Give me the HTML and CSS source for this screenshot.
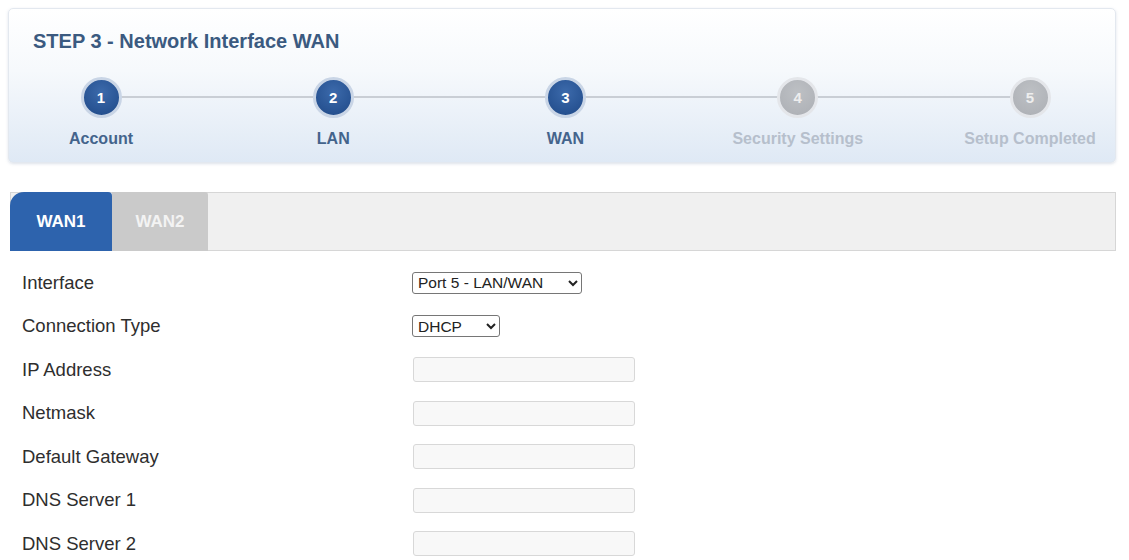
FILE: index.html
```html
<!DOCTYPE html>
<html lang="en">
<head>
<meta charset="utf-8">
<title>STEP 3 - Network Interface WAN</title>
<link rel="stylesheet" href="styles.css">
</head>
<body>
<div class="page">
  <section class="wizard">
    <h1 class="wizard-title">STEP 3 - Network Interface WAN</h1>
    <ol class="steps">
      <li class="step done"><span class="step-dot">1</span><span class="step-label">Account</span></li>
      <li class="step done"><span class="step-dot">2</span><span class="step-label">LAN</span></li>
      <li class="step done"><span class="step-dot">3</span><span class="step-label">WAN</span></li>
      <li class="step todo"><span class="step-dot">4</span><span class="step-label">Security Settings</span></li>
      <li class="step todo"><span class="step-dot">5</span><span class="step-label">Setup Completed</span></li>
    </ol>
  </section>

  <nav class="tabbar">
    <span class="tab tab-active">WAN1</span>
    <span class="tab tab-idle">WAN2</span>
  </nav>

  <form class="form">
    <label class="form-label">Interface</label>
    <div class="form-ctrl">
      <select class="sel sel-port">
        <option>Port 5 - LAN/WAN</option>
      </select>
    </div>

    <label class="form-label">Connection Type</label>
    <div class="form-ctrl">
      <select class="sel sel-type">
        <option>DHCP</option>
      </select>
    </div>

    <label class="form-label">IP Address</label>
    <div class="form-ctrl"><input class="field" type="text" disabled></div>

    <label class="form-label">Netmask</label>
    <div class="form-ctrl"><input class="field" type="text" disabled></div>

    <label class="form-label">Default Gateway</label>
    <div class="form-ctrl"><input class="field" type="text" disabled></div>

    <label class="form-label">DNS Server 1</label>
    <div class="form-ctrl"><input class="field" type="text" disabled></div>

    <label class="form-label">DNS Server 2</label>
    <div class="form-ctrl"><input class="field" type="text" disabled></div>
  </form>
</div>
</body>
</html>
```

FILE: styles.css
```css
* { box-sizing: border-box; }

html, body {
  margin: 0;
  padding: 0;
  background: #ffffff;
  font-family: "Liberation Sans", Arial, sans-serif;
  color: #333333;
}

.page {
  padding: 8px 13px 0 8px;
}

/* ---------- wizard header ---------- */
.wizard {
  height: 155px;
  padding: 20px 20px 0 24px;
  border: 1px solid #e3e8ef;
  border-radius: 5px;
  background: linear-gradient(to bottom, #ffffff 0%, #f6f9fc 40%, #dfe9f5 100%);
  box-shadow: 0 1px 3px rgba(120, 140, 170, 0.25);
}

.wizard-title {
  margin: 0;
  font-size: 20px;
  line-height: 24px;
  font-weight: bold;
  color: #3b5a80;
}

.steps {
  position: relative;
  list-style: none;
  margin: 24px 0 0 3px;
  padding: 0;
  display: flex;
  justify-content: space-between;
}

.steps::before {
  content: "";
  position: absolute;
  top: 19px;
  left: 65px;
  right: 65px;
  height: 2px;
  background: #c9ced5;
}

.step {
  position: relative;
  width: 130px;
  display: flex;
  flex-direction: column;
  align-items: center;
}

.step-dot {
  width: 41px;
  height: 41px;
  border-radius: 50%;
  border: 3px solid #c9d5e6;
  display: flex;
  align-items: center;
  justify-content: center;
  font-size: 15px;
  font-weight: bold;
  color: #ffffff;
}

.step.done .step-dot {
  background: radial-gradient(circle at 50% 35%, #3c6aab 0%, #2a5696 60%, #1f4884 100%);
}

.step.todo .step-dot {
  border-color: #e4e6ea;
  background: radial-gradient(circle at 50% 35%, #bdc0c4 0%, #b1b4b9 70%, #a8abb0 100%);
  color: #eeeeee;
}

.step-label {
  margin-top: 12px;
  font-size: 16px;
  line-height: 18px;
  font-weight: bold;
  white-space: nowrap;
}

.step.done .step-label { color: #44648c; }
.step.todo .step-label { color: #b6bfcc; }

/* ---------- tabs ---------- */
.tabbar {
  margin: 29px 0 0 2px;
  height: 59px;
  display: flex;
  background: #f0f0f0;
  border: 1px solid #d6d6d6;
}

.tab {
  display: flex;
  align-items: center;
  justify-content: center;
  margin: -1px 0 -1px 0;
  font-size: 17px;
  font-weight: bold;
}

.tab-active {
  width: 102px;
  margin-left: -1px;
  background: #2d63ad;
  color: #ffffff;
  border-top-left-radius: 14px;
  border-top-right-radius: 4px;
}

.tab-idle {
  width: 96px;
  background: #cacaca;
  color: #f3f3f3;
  border-top-right-radius: 3px;
}

/* ---------- form ---------- */
.form {
  margin: 10px 0 0 14px;
  display: grid;
  grid-template-columns: 390px 1fr;
  grid-auto-rows: 43.5px;
  align-items: center;
}

.form-label {
  font-size: 18.5px;
  color: #2e2e2e;
}

.form-ctrl {
  display: flex;
  align-items: center;
}

.sel {
  height: 22px;
  font-family: "Liberation Sans", Arial, sans-serif;
  font-size: 15.5px;
  color: #222222;
  background: #ffffff;
  border: 1px solid #767676;
  border-radius: 3px;
  padding: 0 1px;
}

.sel-port { width: 170px; }
.sel-type { width: 88px; }

.field {
  width: 222px;
  height: 25px;
  margin-left: 1px;
  border: 1px solid #d8d8d8;
  border-radius: 3px;
  background: #f8f8f8;
}
```
